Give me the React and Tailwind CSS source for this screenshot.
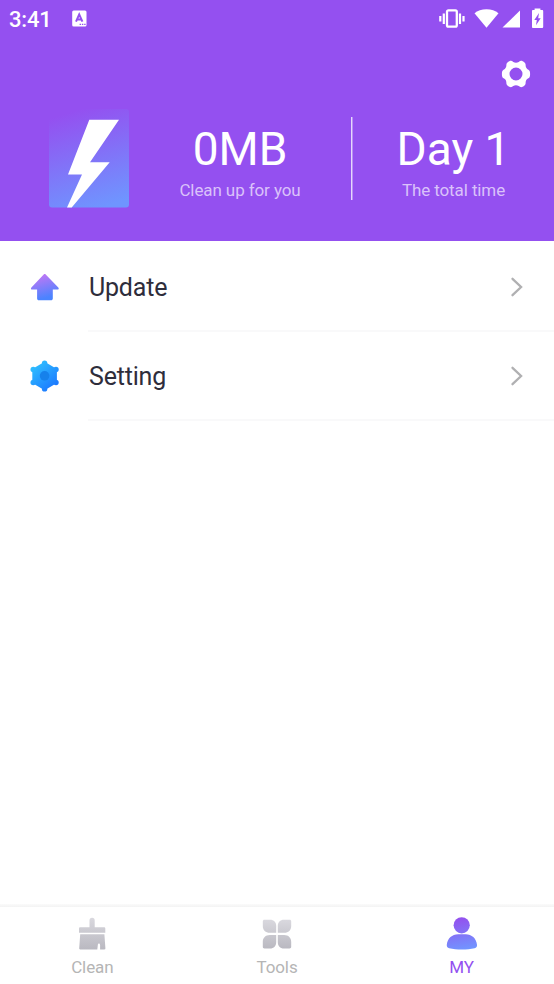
const StatusBar = () => (
    <div className="flex h-[38px] items-center justify-between pl-[9px] pr-[10px]">
        <div className="flex items-center gap-[20px]">
            <span className="pt-[2px] text-[22px] leading-[36px] font-medium tracking-[-0.2px]">3:41</span>
            <svg width="16" height="18" viewBox="0 0 16 18" fill="none">
                <rect x="0.2" y="0.5" width="14.3" height="16" rx="1.5" fill="#fff" />
                <path d="M4 11.700 7.200 4.400l3.200 7.300M5 9.500h4.400" stroke="#9450f0" strokeWidth="2" />
                <path d="M7.600 14.300h6" stroke="#9450f0" strokeWidth="1.200" strokeDasharray="1.400 .9" />
            </svg>
        </div>
        <div className="flex items-center">
            {/* Vibrate */}
            <svg width="26" height="20" viewBox="0 0 26 20" fill="none" stroke="#fff">
                <rect x="8" y="1.400" width="9.800" height="16.200" rx="1.400" strokeWidth="2.300" />
                <path d="M4.800 4.500v10.500M21 4.500v10.500" strokeWidth="2.200" />
                <path d="M1.300 7v5.500M24.500 7v5.500" strokeWidth="2.200" />
            </svg>
            <svg className="ml-[9px]" width="25" height="20" viewBox="0 0 25 20" fill="#fff">
                <path d="M12.500 18.700.5 4.300C3.600 1.700 7.700.3 12.500.3s8.900 1.400 12 4Z" />
            </svg>
            <svg className="ml-[3px]" width="19" height="20" viewBox="0 0 19 20" fill="#fff">
                <path d="M.5 18.500 18 1.500v17Z" />
            </svg>
            <svg className="ml-[10px]" width="13" height="22" viewBox="0 0 13 22">
                <path d="M3.600.5h5.800V2H11c.8 0 1.200.5 1.200 1.200v15.500c0 .8-.5 1.300-1.300 1.300H2.200C1.400 20 1 19.500 1 18.700V3.200C1 2.500 1.400 2 2 2h1.600Z" fill="#fff" />
                <path d="M8 5 3.300 12h2.500L5 17.300l4.700-7H7.200Z" fill="#9450f0" />
            </svg>
        </div>
    </div>
);

const GearIcon = () => (
    <svg width="30" height="28" viewBox="0 0 30 28">
        <path
            fill="#fff"
            fillRule="evenodd"
            d="M8.300 1.200C10 .4 11.200 1 12.200 1.900c1.800 1 3.800 1 5.600 0 1-.9 2.300-1.500 3.900-.7 2.200 1.200 3 2.300 2.900 3.800 0 2.200.9 3.800 2.800 4.700 1.300.6 1.700 2.200 1.700 4.300s-.4 3.700-1.700 4.300c-1.900.9-2.800 2.500-2.800 4.700.1 1.500-.7 2.600-2.900 3.800-1.600.8-2.900.2-3.900-.7-1.800-1-3.800-1-5.600 0-1 .9-2.200 1.500-3.900.7-2.200-1.200-3-2.300-2.900-3.800 0-2.200-.9-3.800-2.800-4.700C1.300 17.700.9 16.100.9 14s.4-3.700 1.700-4.300c1.900-.9 2.800-2.500 2.800-4.700-.1-1.500.7-2.600 2.900-3.800ZM15 7.500a6.500 6.500 0 1 0 0 13 6.500 6.500 0 0 0 0-13Z"
        />
    </svg>
);

const Logo = () => (
    <svg className="ml-[49px] shrink-0" width="80" height="99" viewBox="0 0 80 99">
        <defs>
            <linearGradient id="logo" x1="0.4" y1="0" x2="0.65" y2="1">
                <stop offset="0" stopColor="#9450f0" />
                <stop offset="1" stopColor="#6f95ff" />
            </linearGradient>
        </defs>
        <rect width="80" height="98.500" rx="3" fill="url(#logo)" />
        <path d="M40.300 10.800H70L41 53.200h19.700L22.700 98.500H18l15-33H19Z" fill="#fff" />
    </svg>
);

const Stat = ({ value, label }) => (
    <div className="flex flex-1 flex-col items-center">
        <span className="mt-[12px] text-[46px] leading-[56px]">{value}</span>
        <span className="mt-[2px] text-[17px] leading-[22px] tracking-[-0.1px] text-[#dac2fa]">{label}</span>
    </div>
);

const UpdateIcon = () => (
    <svg width="30" height="32" viewBox="0 0 30 32">
        <defs>
            <linearGradient id="update" x1="0.3" y1="0" x2="0.6" y2="1">
                <stop offset="0" stopColor="#c477f5" />
                <stop offset="0.9" stopColor="#4b83ff" />
            </linearGradient>
        </defs>
        <path
            d="M13.700 3.400c.6-.6 1.400-.6 2 0L28.300 16.500c.9 1 .3 2.100-.8 2.100h-4.700v8.900c0 1.100-.7 1.800-1.800 1.800H8.900c-1.100 0-1.800-.7-1.800-1.800v-8.900H2.200c-1.200 0-1.700-1.200-.8-2.100Z"
            fill="url(#update)"
        />
    </svg>
);

const SettingIcon = () => (
    <svg width="30" height="32" viewBox="0 0 30 32">
        <defs>
            <linearGradient id="setting" x1="3" y1="3" x2="25" y2="29" gradientUnits="userSpaceOnUse">
                <stop offset="0" stopColor="#30c3ff" />
                <stop offset="1" stopColor="#1b75ff" />
            </linearGradient>
        </defs>
        <g fill="url(#setting)">
            <path d="M14.600 1.800 26.900 8.900v14.200l-12.300 7.100L2.300 23.100V8.900Z" />
            <circle cx="14.600" cy="3.100" r="2.700" />
            <circle cx="26" cy="9.500" r="2.700" />
            <circle cx="26" cy="22.500" r="2.700" />
            <circle cx="14.600" cy="28.900" r="2.700" />
            <circle cx="3.200" cy="22.500" r="2.700" />
            <circle cx="3.200" cy="9.500" r="2.700" />
        </g>
        <circle cx="14.600" cy="15.800" r="4.800" fill="#1681eb" />
    </svg>
);

const MenuRow = ({ icon, label }) => (
    <div className="flex h-[89.500px] items-stretch pl-[30px]">
        <div className="flex w-[30px] items-center">{icon}</div>
        <div className="ml-[28px] flex flex-1 items-center justify-between border-b-2 border-[#f9f9fa] pr-[30px]">
            <span className="pl-[1px] pt-[4.400px] text-[25px] leading-[30px] tracking-[-0.2px] text-[#2e2d3b]">{label}</span>
            <svg className="mt-[2px]" width="14" height="20" viewBox="0 0 14 20" fill="none" stroke="#b0b0b2" strokeWidth="2.300">
                <path d="m2.500 1.800 8.600 8.200-8.600 8.200" strokeLinecap="round" />
            </svg>
        </div>
    </div>
);

const CleanIcon = () => (
    <svg width="34" height="34" viewBox="0 0 34 34">
        <defs>
            <linearGradient id="clean" x1="0" y1="1" x2="0" y2="33" gradientUnits="userSpaceOnUse">
                <stop offset="0" stopColor="#d9d8de" />
                <stop offset="1" stopColor="#b9b8c0" />
            </linearGradient>
        </defs>
        <g fill="url(#clean)">
            <path d="M14.500 10.200V3.400a2.600 2.600 0 0 1 5.200 0v6.800h9.200c.9 0 1.400.5 1.400 1.400v4.100H4v-4.100c0-.9.500-1.400 1.400-1.400Z" />
            <path d="M5.200 17.200h24.200l1 14c0 .8-.3 1.200-1 1.200h-4.300v-4.100c0-2.400-2.300-2.400-2.300 0l-.5 4.100H5.200c-.7 0-1-.4-1-1.200Z" />
        </g>
    </svg>
);

const ToolsIcon = () => (
    <svg width="34" height="34" viewBox="0 0 34 34">
        <defs>
            <linearGradient id="tools" x1="0" y1="3" x2="0" y2="32" gradientUnits="userSpaceOnUse">
                <stop offset="0" stopColor="#d9d8de" />
                <stop offset="1" stopColor="#b9b8c0" />
            </linearGradient>
        </defs>
        <g fill="url(#tools)">
            <path d="M4.500 2.800H10c4 0 6.200 2.600 6.200 6.500v6.500H9.800c-4.300 0-7-2.800-7-6.800V4.500c0-1.100.6-1.700 1.700-1.700Z" />
            <path d="M29.500 2.800H24c-4 0-6.200 2.600-6.200 6.500v6.500h6.400c4.300 0 7-2.800 7-6.800V4.500c0-1.100-.6-1.700-1.700-1.700Z" />
            <path d="M4.500 31.500H10c4 0 6.200-2.600 6.200-6.500v-6.900H9.800c-4.300 0-7 2.800-7 6.800v4.900c0 1.100.6 1.700 1.700 1.700Z" />
            <path d="M29.500 31.500H24c-4 0-6.200-2.600-6.200-6.500v-6.900h6.400c4.300 0 7 2.800 7 6.800v4.900c0 1.100-.6 1.700-1.700 1.700Z" />
        </g>
    </svg>
);

const UserIcon = () => (
    <svg width="34" height="34" viewBox="0 0 34 34">
        <defs>
            <linearGradient id="user" x1="12" y1="1" x2="18" y2="33" gradientUnits="userSpaceOnUse">
                <stop offset="0" stopColor="#9450ee" />
                <stop offset="1" stopColor="#7195ff" />
            </linearGradient>
        </defs>
        <g fill="url(#user)">
            <circle cx="16.700" cy="8.300" r="8.100" />
            <path d="M1.800 27.800c.6-6.400 5.400-10.500 11.300-10.500h7.600c5.900 0 10.700 4.100 11.300 10.500.2 2-.6 2.900-2.400 3.400-7.500 1.700-17.900 1.700-25.400 0-1.800-.5-2.600-1.400-2.400-3.400Z" />
        </g>
    </svg>
);

const tabs = [
    { label: "Clean", icon: <CleanIcon /> },
    { label: "Tools", icon: <ToolsIcon /> },
    { label: "MY", icon: <UserIcon />, active: true },
];

const App = () => {
    return (
        <div className="flex h-[984px] w-[554px] flex-col bg-white font-['Roboto',sans-serif]">
            <header className="h-[241px] bg-[#9450f0] text-white">
                <StatusBar />
                <div className="flex h-[71px] items-center justify-end pr-[23.500px]">
                    <GearIcon />
                </div>
                <div className="flex">
                    <Logo />
                    <Stat value="0MB" label="Clean up for you" />
                    <div className="mt-2 h-[83px] w-[2px] border-l border-[#e6d6fc] bg-[#b98ef5]" />
                    <div className="flex w-[201px]">
                        <Stat value="Day 1" label="The total time" />
                    </div>
                </div>
            </header>

            <main className="flex-1 pt-[1px]">
                <MenuRow icon={<UpdateIcon />} label="Update" />
                <MenuRow icon={<SettingIcon />} label="Setting" />
            </main>

            {/* Bottom navigation */}
            <div className="h-[3px] bg-linear-to-b from-[#fbfbfb] to-[#f3f3f3]" />
            <nav className="flex h-[77px] bg-white">
                {tabs.map((tab) => (
                    <div key={tab.label} className="flex flex-1 flex-col items-center pt-[10px]">
                        {tab.icon}
                        <span className={tab.active ? "mt-[5px] text-[17px] leading-[22px] tracking-[-0.1px] text-[#9450f0]" : "mt-[5px] text-[17px] leading-[22px] tracking-[-0.1px] text-[#b5b5b5]"}>
                            {tab.label}
                        </span>
                    </div>
                ))}
            </nav>
        </div>
    );
};

export default App;
